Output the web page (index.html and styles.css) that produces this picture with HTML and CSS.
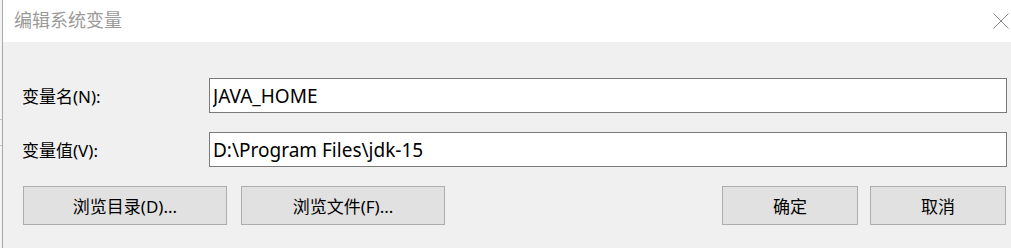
FILE: index.html
```html
<!DOCTYPE html>
<html lang="zh-CN">
<head>
    <meta charset="UTF-8">
    <title>编辑系统变量</title>
    <link rel="stylesheet" href="styles.css">
</head>
<body>
    <div class="screen">
        <div class="behind">
            <span class="behind-line top"></span>
            <span class="behind-line"></span>
        </div>

        <div class="dialog">
            <div class="titlebar">
                <span class="title">编辑系统变量</span>
                <svg class="close" width="16" height="16" viewBox="0 0 16 16">
                    <path d="M0.5 0.5 L15.5 15.5 M15.5 0.5 L0.5 15.5" stroke="#8a8a8a" stroke-width="1" fill="none"/>
                </svg>
            </div>

            <div class="content">
                <div class="field">
                    <label for="var-name">变量名(N):</label>
                    <input type="text" id="var-name" value="JAVA_HOME">
                </div>
                <div class="field">
                    <label for="var-value">变量值(V):</label>
                    <input type="text" id="var-value" value="D:\Program Files\jdk-15">
                </div>

                <div class="actions">
                    <div class="group wide">
                        <button type="button">浏览目录(D)...</button>
                        <button type="button">浏览文件(F)...</button>
                    </div>
                    <div class="group narrow">
                        <button type="button">确定</button>
                        <button type="button">取消</button>
                    </div>
                </div>
            </div>
        </div>
    </div>
</body>
</html>
```

FILE: styles.css
```css
html, body {
    margin: 0;
    padding: 0;
}
body {
    font-family: "Noto Sans", "Noto Sans CJK SC", sans-serif;
    background: #f0f0f0;
}
.screen {
    display: flex;
    width: 1011px;
    height: 248px;
    overflow: hidden;
}

/* sliver of the window underneath */
.behind {
    width: 2px;
    background: #f4f4f4;
    border-right: 1px solid #a8a8a8;
    display: flex;
    flex-direction: column;
    padding-top: 119px;
}
.behind-line {
    display: block;
    height: 1px;
    background: #c8c8c8;
}
.behind-line.top {
    margin-bottom: 25px;
}

.dialog {
    flex: 1;
    display: flex;
    flex-direction: column;
    background: #f0f0f0;
}
.titlebar {
    height: 42px;
    box-sizing: border-box;
    padding: 0 2px 4px 11px;
    background: #fff;
    display: flex;
    align-items: center;
    justify-content: space-between;
}
.title {
    font-family: "Noto Sans CJK SC", sans-serif;
    font-size: 18px;
    color: #9a9a9a;
}
.close {
    display: block;
    margin-top: 3px;
}

.content {
    padding: 36px 4px 0 19px;
}
.field {
    display: flex;
    align-items: center;
    margin-bottom: 19px;
}
.field label {
    width: 187px;
    font-size: 17px;
    color: #000;
}
.field input {
    flex: 1;
    height: 35px;
    box-sizing: border-box;
    border: 1px solid #7a7a7a;
    padding: 0 3px;
    margin: 0;
    font-family: inherit;
    font-size: 19px;
    color: #000;
    background: #fff;
    outline: none;
}

.actions {
    display: flex;
    justify-content: space-between;
    margin-top: 7px;
    padding: 0 1px 0 1px;
}
.group {
    display: flex;
}
.group.wide {
    gap: 14px;
}
.group.narrow {
    gap: 12px;
}
.group button {
    height: 39px;
    border: 1px solid #adadad;
    background: #e1e1e1;
    font-family: inherit;
    font-size: 17px;
    color: #000;
    padding: 0;
    margin: 0;
}
.group.wide button {
    width: 204px;
}
.group.narrow button {
    width: 136px;
}
```
